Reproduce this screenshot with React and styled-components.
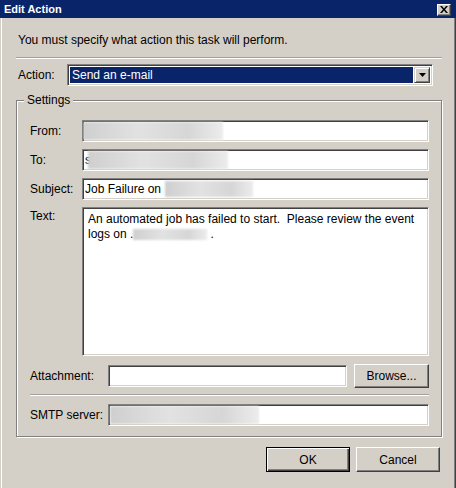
import React from 'react';
import styled, { createGlobalStyle } from 'styled-components';

const GlobalStyle = createGlobalStyle`
  html, body {
    margin: 0;
    padding: 0;
    background: #d4d0c8;
  }
  body {
    font-family: "Liberation Sans", Arial, sans-serif;
    font-size: 12px;
    color: #000;
  }
`;

// классическая рамка окна Windows
const Window = styled.div`
  width: 456px;
  height: 488px;
  overflow: hidden;
  background: #d4d0c8;
  display: flex;
  flex-direction: column;
  box-shadow: inset 1px 0 #d4d0c8, inset 2px 0 #fff, inset -1px 0 #404040, inset -2px 0 #808080;
`;

const TitleBar = styled.div`
  height: 18px;
  flex-shrink: 0;
  background: #0a246a;
  display: flex;
  align-items: center;
  justify-content: space-between;
  padding: 0 5px 0 4px;
`;

const Title = styled.span`
  color: #fff;
  font-weight: 700;
  font-size: 11px;
  line-height: 18px;
`;

const CloseButton = styled.div`
  width: 14px;
  height: 12px;
  margin-top: 1px;
  box-sizing: border-box;
  background: #d4d0c8;
  border: 1px solid;
  border-color: #fff #404040 #404040 #fff;
  box-shadow: inset -1px -1px #808080;
  display: flex;
  align-items: center;
  justify-content: center;
`;

const Client = styled.div`
  display: flex;
  flex-direction: column;
  padding: 0 14px 0 16px;
`;

const Intro = styled.div`
  margin-top: 15px;
  padding-left: 2px;
  line-height: 14px;
`;

const Etched = styled.div`
  height: 1px;
  border-bottom: 1px solid #fff;
  background: #a0a0a0;
  margin-top: ${(p) => p.$top || 0}px;
`;

const ActionRow = styled.div`
  display: grid;
  grid-template-columns: 49px 1fr;
  align-items: center;
  margin-top: 5px;
  padding-left: 2px;
  padding-right: 9px;
`;

const Combo = styled.div`
  height: 22px;
  box-sizing: border-box;
  background: #fff;
  border: 1px solid;
  border-color: #808080 #fff #fff #808080;
  box-shadow: inset 1px 1px #404040, inset -1px -1px #d4d0c8;
  padding: 2px;
  display: flex;
`;

const Selected = styled.div`
  flex: 1;
  background: #0a246a;
  color: #fff;
  line-height: 16px;
  padding-left: 2px;
  margin-right: 1px;
`;

const DropButton = styled.div`
  width: 16px;
  box-sizing: border-box;
  background: #d4d0c8;
  border: 1px solid;
  border-color: #d4d0c8 #404040 #404040 #d4d0c8;
  box-shadow: inset 1px 1px #fff, inset -1px -1px #808080;
  display: flex;
  align-items: center;
  justify-content: center;
`;

const Group = styled.div`
  position: relative;
  margin-top: 14px;
  border: 1px solid #808080;
  box-shadow: inset 1px 1px #fff, 1px 1px #fff;
  padding: 19px 12px 10px 13px;
  display: flex;
  flex-direction: column;
`;

const Legend = styled.span`
  position: absolute;
  top: -8px;
  left: 7px;
  padding: 0 3px;
  background: #d4d0c8;
  line-height: 14px;
`;

const FieldGrid = styled.div`
  display: grid;
  grid-template-columns: 52px 1fr;
  row-gap: 7px;
`;

const Label = styled.label`
  align-self: ${(p) => (p.$top ? 'start' : 'center')};
  padding-top: ${(p) => (p.$top ? 2 : 0)}px;
  line-height: 14px;
  white-space: nowrap;
`;

const Input = styled.div`
  height: ${(p) => p.$h || 22}px;
  box-sizing: border-box;
  background: #fff;
  border: 1px solid;
  border-color: #808080 #fff #fff #808080;
  box-shadow: inset 1px 1px #404040, inset -1px -1px #d4d0c8;
  padding: ${(p) => (p.$multi ? '4px 5px' : '0 2px')};
  display: ${(p) => (p.$multi ? 'block' : 'flex')};
  align-items: center;
  line-height: ${(p) => (p.$multi ? '15px' : '16px')};
  white-space: pre-wrap;
  overflow: hidden;
`;

const TextLine = styled.div`
  white-space: pre;
  height: 15px;
`;

const Redacted = styled.span`
  display: inline-block;
  vertical-align: middle;
  width: ${(p) => p.$w}px;
  height: ${(p) => p.$h || 16}px;
  margin-left: ${(p) => p.$ml || 0}px;
  margin-right: ${(p) => p.$mr || 0}px;
  background: linear-gradient(90deg, #cfcfcf 0%, #e2e2e2 40%, #d6d6d6 75%, #ececec 100%);
  filter: blur(1.2px);
`;

const WideRow = styled.div`
  display: grid;
  grid-template-columns: 71px 1fr ${(p) => (p.$button ? '75px' : '')};
  column-gap: 7px;
  align-items: center;
  margin-top: ${(p) => p.$top || 0}px;
`;

const WideLabel = styled.label`
  line-height: 14px;
  white-space: nowrap;
`;

const Button = styled.button`
  font: inherit;
  color: #000;
  height: ${(p) => p.$h || 25}px;
  width: ${(p) => p.$w || 84}px;
  padding: 0;
  background: #d4d0c8;
  border: 1px solid;
  border-color: ${(p) => (p.$default ? '#000' : '#fff #404040 #404040 #fff')};
  box-shadow: ${(p) =>
    p.$default
      ? 'inset 1px 1px #fff, inset -1px -1px #404040, inset -2px -2px #808080'
      : 'inset -1px -1px #808080'};
  cursor: default;
`;

const ButtonRow = styled.div`
  display: flex;
  justify-content: flex-end;
  gap: 6px;
  margin-top: 10px;
  padding-right: 2px;
`;

const CloseIcon = () => (
  <svg width="8" height="7" viewBox="0 0 8 7">
    <path d="M0 0h2l2 2.5L6 0h2L5 3.5 8 7H6L4 4.5 2 7H0l3-3.5z" fill="#000" />
  </svg>
);

const ArrowIcon = () => (
  <svg width="7" height="4" viewBox="0 0 7 4">
    <path d="M0 0h7L3.5 4z" fill="#000" />
  </svg>
);

export default function App() {
  return (
    <>
      <GlobalStyle />
      <Window>
        <TitleBar>
          <Title>Edit Action</Title>
          <CloseButton>
            <CloseIcon />
          </CloseButton>
        </TitleBar>
        <Client>
          <Intro>You must specify what action this task will perform.</Intro>
          <Etched $top={10} />
          <ActionRow>
            <Label>Action:</Label>
            <Combo>
              <Selected>Send an e-mail</Selected>
              <DropButton>
                <ArrowIcon />
              </DropButton>
            </Combo>
          </ActionRow>

          <Group>
            <Legend>Settings</Legend>
            <FieldGrid>
              <Label>From:</Label>
              <Input>
                <Redacted $w={140} $ml={-2} $h={18} />
              </Input>
              <Label>To:</Label>
              <Input>
                s<Redacted $w={140} $ml={-3} $h={18} />
              </Input>
              <Label>Subject:</Label>
              <Input>
                Job Failure on <Redacted $w={88} $ml={1} />
              </Input>
              <Label $top>Text:</Label>
              <Input $multi $h={149}>
                <TextLine>An automated job has failed to start.  Please review the event</TextLine>
                <TextLine>
                  logs on .<Redacted $w={74} $h={11} $mr={3} />.
                </TextLine>
              </Input>
            </FieldGrid>

            <WideRow $button $top={8}>
              <WideLabel>Attachment:</WideLabel>
              <Input />
              <Button $w={75} $h={24}>Browse...</Button>
            </WideRow>
            <Etched $top={6} />
            <WideRow $top={8}>
              <WideLabel>SMTP server:</WideLabel>
              <Input>
                <Redacted $w={149} $ml={-1} $h={18} />
              </Input>
            </WideRow>
          </Group>

          <ButtonRow>
            <Button $default>OK</Button>
            <Button>Cancel</Button>
          </ButtonRow>
        </Client>
      </Window>
    </>
  );
}
